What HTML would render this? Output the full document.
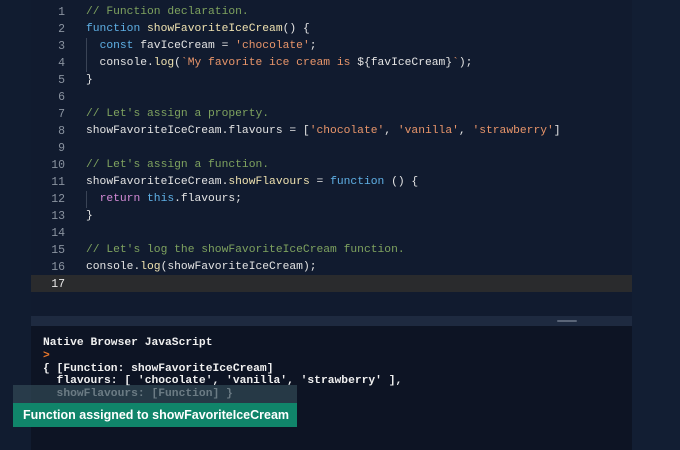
<!DOCTYPE html>
<html><head><style>
body{margin:0;width:680px;height:450px;background:#111c30;overflow:hidden;position:relative;font-family:"Liberation Mono",monospace}
.ed{position:absolute;left:31px;top:0;width:601px;height:450px;background:#111b2f}
.side{position:absolute;left:632px;top:0;width:48px;height:450px;background:#121e33}
.hl{position:absolute;left:31px;top:275px;width:601px;height:17px;background:#2a2b2d}
.ln{position:absolute;left:31px;width:34px;text-align:right;color:#8a93a0;font-size:11.5px;line-height:17px}
.code{position:absolute;left:86px;color:#e4e4e4;font-size:11.3px;line-height:17px;white-space:pre}
.c{color:#7fa35f}.k{color:#5fb0e5}.s{color:#e8956a}.f{color:#efe2b0}.r{color:#d48ad6}
.guide{position:absolute;left:86px;width:1px;background:#3a4456}
.ph{position:absolute;left:31px;top:316px;width:601px;height:10px;background:#1e2a40}
.handle{position:absolute;left:557px;top:320px;width:20px;height:2px;background:#5a6578;border-radius:1px}
.con{position:absolute;left:31px;top:326px;width:601px;height:124px;background:#0d1424}
.ct{position:absolute;left:43px;top:337px;color:#f0f0f0;font-size:11.3px;line-height:12.8px;white-space:pre;font-weight:bold}
.toast{position:absolute;left:13px;top:385px;width:284px;height:42px;background:rgba(50,72,86,.7)}
.tg{position:absolute;left:13px;top:403px;width:284px;height:24px;background:#10856a;color:#fff;font-family:"Liberation Sans",sans-serif;font-weight:bold;font-size:12.5px;line-height:24px;padding-left:10px;box-sizing:border-box}
</style></head><body>
<div class="ed"></div><div class="side"></div><div class="hl"></div>
<div class="ln" style="top:4px">1<br>2<br>3<br>4<br>5<br>6<br>7<br>8<br>9<br>10<br>11<br>12<br>13<br>14<br>15<br>16<br><span style="color:#e8e8e8">17</span></div>
<div class="guide" style="top:38px;height:34px"></div>
<div class="guide" style="top:191px;height:17px"></div>
<div class="code" style="top:4px"><span class="c">// Function declaration.</span>
<span class="k">function</span> <span class="f">showFavoriteIceCream</span>() {
  <span class="k">const</span> favIceCream = <span class="s">'chocolate'</span>;
  console.<span class="f">log</span>(<span class="s">`My favorite ice cream is </span>${favIceCream}<span class="s">`</span>);
}

<span class="c">// Let's assign a property.</span>
showFavoriteIceCream.flavours = [<span class="s">'chocolate'</span>, <span class="s">'vanilla'</span>, <span class="s">'strawberry'</span>]

<span class="c">// Let's assign a function.</span>
showFavoriteIceCream.<span class="f">showFlavours</span> = <span class="k">function</span> () {
  <span class="r">return</span> <span class="k">this</span>.flavours;
}

<span class="c">// Let's log the showFavoriteIceCream function.</span>
console.<span class="f">log</span>(showFavoriteIceCream);
</div>
<div class="ph"></div><div class="handle"></div>
<div class="con"></div>
<div class="ct">Native Browser JavaScript
<span style="color:#e8762a">&gt;</span>
{ [Function: showFavoriteIceCream]
  flavours: [ 'chocolate', 'vanilla', 'strawberry' ],
  showFlavours: [Function] }</div>
<div class="toast"></div>
<div class="tg">Function assigned to showFavoriteIceCream</div>
</body></html>
